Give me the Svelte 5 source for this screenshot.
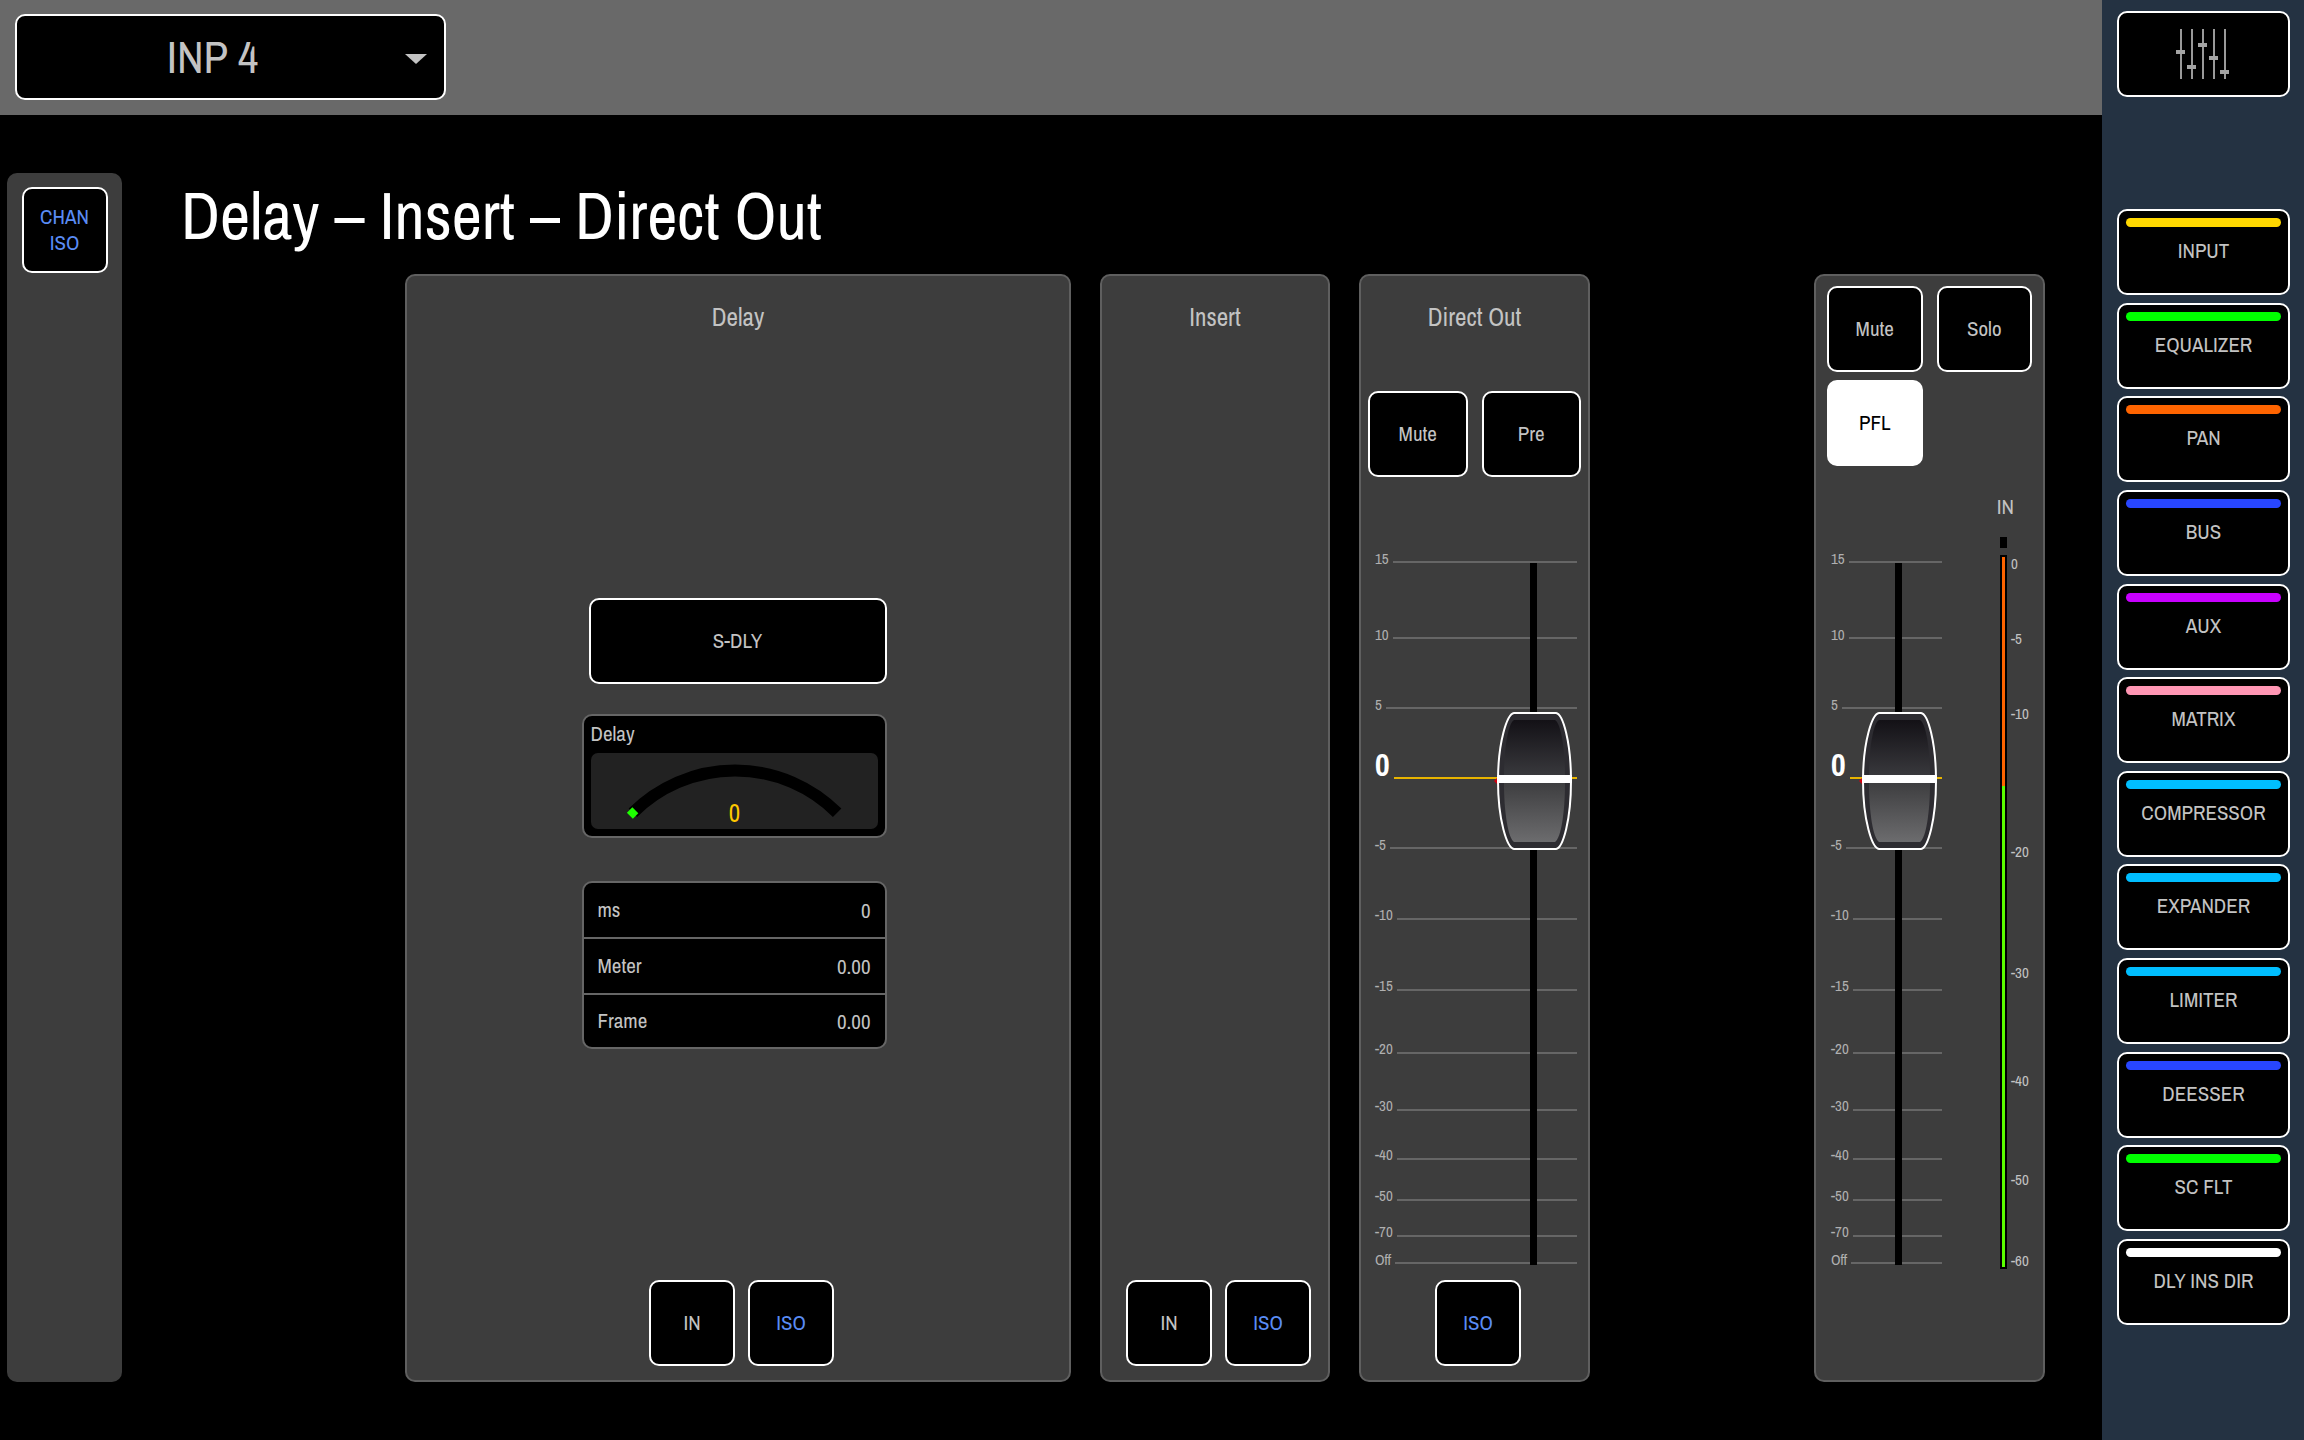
<script>
  const channels = ['INP 1', 'INP 2', 'INP 3', 'INP 4', 'INP 5', 'INP 6'];
  let channel = 'INP 4';

  const pages = [
    { name: 'INPUT', color: '#ffd800' },
    { name: 'EQUALIZER', color: '#00ff00' },
    { name: 'PAN', color: '#ff6400' },
    { name: 'BUS', color: '#2846ff' },
    { name: 'AUX', color: '#c800ff' },
    { name: 'MATRIX', color: '#ff96b4' },
    { name: 'COMPRESSOR', color: '#00beff' },
    { name: 'EXPANDER', color: '#00beff' },
    { name: 'LIMITER', color: '#00beff' },
    { name: 'DEESSER', color: '#2846ff' },
    { name: 'SC FLT', color: '#00ff00' },
    { name: 'DLY INS DIR', color: '#ffffff' },
  ];

  const delayValues = [
    ['ms', '0'],
    ['Meter', '0.00'],
    ['Frame', '0.00'],
  ];

  // distance of each mark from the top of the fader scale
  const faderMarks = [
    ['15', 0], ['10', 76], ['5', 146], ['0', 216], ['-5', 286], ['-10', 356], ['-15', 427],
    ['-20', 490], ['-30', 547], ['-40', 596], ['-50', 637], ['-70', 673], ['Off', 700],
  ];
  const meterMarks = [
    ['0', 0], ['-5', 75], ['-10', 150], ['-20', 288], ['-30', 408], ['-40', 516], ['-50', 615], ['-60', 696],
  ];

  const rows = (marks) =>
    marks
      .slice(1)
      .map((mark, i) => `minmax(0, ${mark[1] - marks[i][1]}fr)`)
      .join(' ') + ' 0px';

  let directLevel = 0;
  let channelLevel = 0;

  // cap position at 0 dB and level of the input meter, in percent
  const zeroPos = (219 / 700) * 100;
  const hotPart = 32.2;

  const strips = [52, 67, 45, 58, 72];
</script>

{#snippet fader(label, level, onlevel)}
  <div class="fader">
    <div class="scale" style="grid-template-rows: {rows(faderMarks)}">
      {#each faderMarks as [text]}
        <div class="mark" class:zero={text === '0'}>
          <span>{text}</span>
          <i></i>
        </div>
      {/each}
    </div>
    <div class="track"></div>
    <svg class="cap" style="top: {zeroPos}%" width="80" height="138" viewBox="0 0 80 138" aria-hidden="true">
      <defs>
        <linearGradient id="capTop" x1="0" y1="0" x2="0" y2="1">
          <stop offset="0" stop-color="#131116" />
          <stop offset="1" stop-color="#38383c" />
        </linearGradient>
        <linearGradient id="capBottom" x1="0" y1="0" x2="0" y2="1">
          <stop offset="0" stop-color="#3e3e40" />
          <stop offset="1" stop-color="#6c6c6e" />
        </linearGradient>
      </defs>
      <path d="M1 69l4-4v8z" fill="#d00010" />
      <path
        d="M21 1H63C70 2 78 30 78 69C78 108 70 136 63 137H21C14 136 5 108 5 69C5 30 14 2 21 1Z"
        fill="#2d2c31"
        stroke="#fff"
        stroke-width="2"
      />
      <path d="M21 8H62C68 11 72 38 72 63H11C11 38 15 11 21 8Z" fill="url(#capTop)" />
      <path d="M11 71H72C72 100 68 126 62 130H21C15 126 11 100 11 71Z" fill="url(#capBottom)" />
      <path d="M4 63H79V71H4Z" fill="#fff" />
    </svg>
    <input type="range" min="-100" max="15" value={level} aria-label={label} on:input={onlevel} />
  </div>
{/snippet}

<div class="app">
  <div class="main">
    <header>
      <div class="picker">
        <select bind:value={channel} aria-label="Channel">
          {#each channels as name}
            <option>{name}</option>
          {/each}
        </select>
      </div>
    </header>

    <div class="work">
      <aside>
        <button type="button" class="square iso">CHAN<br />ISO</button>
      </aside>

      <main>
        <h1>Delay – Insert – Direct Out</h1>

        <div class="panels">
          <section class="panel delay">
            <h2>Delay</h2>
            <div class="delay-body">
              <button type="button" class="sdly">S-DLY</button>
              <div class="knob">
                <h3>Delay</h3>
                <svg viewBox="0 0 288 76" role="img" aria-label="Delay amount">
                  <path d="M42 60A145 145 0 0 1 247 60" fill="none" stroke="#000" stroke-width="12" />
                  <path d="M36 60L41.500 54.500L47.500 60.500L42 66Z" fill="#1eff00" />
                  <text x="144" y="69" text-anchor="middle">0</text>
                </svg>
              </div>
              <table>
                <tbody>
                  {#each delayValues as [unit, value]}
                    <tr>
                      <th scope="row">{unit}</th>
                      <td>{value}</td>
                    </tr>
                  {/each}
                </tbody>
              </table>
            </div>
            <div class="switches">
              <button type="button" class="square">IN</button>
              <button type="button" class="square iso">ISO</button>
            </div>
          </section>

          <section class="panel insert">
            <h2>Insert</h2>
            <div class="switches">
              <button type="button" class="square">IN</button>
              <button type="button" class="square iso">ISO</button>
            </div>
          </section>

          <section class="panel direct">
            <h2>Direct Out</h2>
            <div class="pair">
              <button type="button">Mute</button>
              <button type="button">Pre</button>
            </div>
            {@render fader('Direct out level', directLevel, (e) => (directLevel = +e.target.value))}
            <div class="switches">
              <button type="button" class="square iso">ISO</button>
            </div>
          </section>

          <section class="panel channel">
            <div class="pair">
              <button type="button">Mute</button>
              <button type="button">Solo</button>
              <button type="button" class="active" aria-pressed="true">PFL</button>
            </div>
            <h4>IN</h4>
            <div class="levels">
              {@render fader('Channel level', channelLevel, (e) => (channelLevel = +e.target.value))}
              <div class="meter">
                <div class="bars">
                  <div class="clip"></div>
                  <div class="bar">
                    <div class="hot" style="height: {hotPart}%"></div>
                    <div class="ok"></div>
                  </div>
                </div>
                <div class="meter-scale" style="grid-template-rows: {rows(meterMarks)}">
                  {#each meterMarks as [text]}
                    <span>{text}</span>
                  {/each}
                </div>
              </div>
            </div>
          </section>
        </div>
      </main>
    </div>
  </div>

  <nav>
    <button type="button" aria-label="Mixer">
      <svg width="56" height="50" viewBox="0 0 56 50" aria-hidden="true">
        {#each strips as y, i}
          <rect x={4 + i * 11} y="0" width="2" height="50" fill="#999" />
          <rect x={i * 11} y={y - 31} width="9" height="4" fill="#a4a4a4" />
        {/each}
      </svg>
    </button>
    <div class="pages">
      {#each pages as page}
        <button type="button">
          <i style="background: {page.color}"></i>
          <span>{page.name}</span>
        </button>
      {/each}
    </div>
  </nav>
</div>

<style>
  :global(body) {
    margin: 0;
    background: #000;
  }
  .app {
    display: flex;
    min-height: 100vh;
    background: #000;
    color: #c3c3c3;
    font: 21px/24px 'Archivo Narrow', 'Liberation Sans Narrow', 'Liberation Sans', sans-serif;
  }
  .app *,
  .app {
    box-sizing: border-box;
  }
  h1,
  h2,
  h3,
  h4 {
    margin: 0;
    font-weight: 400;
  }
  button {
    height: 86px;
    padding: 0;
    border: 2px solid #fff;
    border-radius: 10px;
    background: #000;
    color: inherit;
    font: inherit;
    cursor: pointer;
  }
  .square {
    width: 86px;
  }
  .iso {
    color: #5a8cf5;
  }
  .active {
    background: #fff;
    color: #000;
  }

  .main {
    flex: 1;
    display: flex;
    flex-direction: column;
    min-width: 0;
  }
  header {
    height: 115px;
    padding: 14px 15px;
    background: #696969;
  }
  .picker {
    position: relative;
    width: 431px;
  }
  .picker::after {
    content: '';
    position: absolute;
    right: 19px;
    top: 40px;
    border: 11px solid transparent;
    border-top: 10px solid #c3c3c3;
    border-bottom: 0;
    pointer-events: none;
  }
  select {
    display: block;
    width: 100%;
    height: 86px;
    padding: 0 36px 0 0;
    border: 2px solid #fff;
    border-radius: 10px;
    appearance: none;
    background: #000;
    color: #c3c3c3;
    font: inherit;
    font-size: 45px;
    line-height: 56px;
    text-align-last: center;
  }
  .work {
    flex: 1;
    display: flex;
    gap: 59px;
    padding: 58px 57px 58px 7px;
  }
  aside {
    width: 115px;
    padding-top: 14px;
    border-radius: 10px;
    background: #3d3d3d;
    text-align: center;
  }
  aside .square {
    line-height: 26px;
  }
  main {
    flex: 1;
    display: flex;
    flex-direction: column;
  }
  h1 {
    height: 101px;
    color: #fff;
    font-size: 66px;
    line-height: 86px;
  }

  .panels {
    flex: 1;
    display: flex;
    gap: 29px;
    padding-left: 224px;
  }
  .panel {
    display: flex;
    flex-direction: column;
    border: 2px solid #5f5f5f;
    border-radius: 10px;
    background: #3d3d3d;
  }
  h2 {
    height: 115px;
    padding-top: 25px;
    font-size: 25px;
    line-height: 32px;
    text-align: center;
  }
  .switches {
    display: flex;
    justify-content: center;
    gap: 13px;
    margin-top: auto;
    padding: 0 0 14px 7px;
  }

  .delay {
    flex: 1;
  }
  .delay-body {
    display: flex;
    flex-direction: column;
    align-items: flex-end;
    width: 313px;
    margin: 207px auto 0;
    padding-right: 8px;
  }
  .sdly {
    width: 298px;
  }
  .knob {
    width: 305px;
    height: 124px;
    margin: 30px 0 43px;
    padding: 7px;
    border: 2px solid #666;
    border-radius: 10px;
    background: #000;
  }
  h3 {
    height: 30px;
    font-size: 21px;
    line-height: 22px;
  }
  .knob svg {
    display: block;
    width: 100%;
    border-radius: 7px;
    background: #222;
  }
  .knob text {
    fill: #ffc800;
    font-size: 25px;
  }
  table {
    width: 305px;
    height: 168px;
    border: 2px solid #666;
    border-radius: 10px;
    border-spacing: 0;
    background: #000;
  }
  th,
  td {
    padding: 0 14px;
    font-weight: 400;
    text-align: left;
  }
  td {
    padding-top: 3px;
    text-align: right;
  }
  tr:not(:last-child) > * {
    border-bottom: 2px solid #666;
  }

  .insert {
    width: 230px;
  }
  .direct,
  .channel {
    width: 231px;
  }
  .channel {
    margin-left: 195px;
  }
  .pair {
    display: grid;
    grid-template-columns: 1fr 1fr;
    gap: 8px 14px;
    padding: 0 7px;
  }
  .channel .pair {
    padding: 10px 11px 0;
  }

  .fader {
    position: relative;
    flex: 1;
    display: flex;
    flex-direction: column;
    color: #b0b0b0;
    font-size: 15px;
    line-height: 16px;
  }
  .direct .fader {
    margin: 85px 11px 17px 14px;
  }
  .scale {
    flex: 1;
    display: grid;
  }
  .mark {
    display: flex;
    align-items: center;
    gap: 4px;
    height: 0;
  }
  .mark span {
    padding-bottom: 7px;
  }
  .mark i {
    flex: 1;
    height: 2px;
    background: #666;
  }
  .zero span {
    padding-bottom: 26px;
    color: #fff;
    font-size: 32px;
    font-weight: 700;
  }
  .zero i {
    background: #e8b400;
  }
  .track {
    position: absolute;
    top: 1px;
    right: 40px;
    bottom: -2px;
    width: 7px;
    background: #000;
  }
  .cap {
    position: absolute;
    right: 4px;
    transform: translateY(-50%);
  }
  .fader input {
    position: absolute;
    top: 0;
    right: 4px;
    width: 76px;
    height: 100%;
    margin: 0;
    opacity: 0;
    writing-mode: vertical-lr;
    direction: rtl;
  }

  h4 {
    margin: 29px 29px 0 0;
    line-height: 24px;
    text-align: right;
  }
  .levels {
    flex: 1;
    display: flex;
    justify-content: space-between;
    padding: 18px 12px 111px 15px;
  }
  .levels .fader {
    flex: 0 0 111px;
    margin: 25px 0 6px;
  }
  .meter {
    display: flex;
    gap: 4px;
    width: 34px;
    margin-right: -3px;
  }
  .bars {
    display: flex;
    flex-direction: column;
    gap: 7px;
  }
  .clip {
    width: 7px;
    height: 11px;
    background: #000;
  }
  .bar {
    flex: 1;
    display: flex;
    flex-direction: column;
    padding: 2px;
    width: 7px;
    background: #000;
  }
  .hot {
    background: #ff6400;
  }
  .ok {
    flex: 1;
    background: #5aff00;
  }
  .meter-scale {
    flex: 1;
    display: grid;
    margin: 27px 0 8px;
    color: #c3c3c3;
    font-size: 15px;
    line-height: 16px;
  }
  .meter-scale span {
    display: flex;
    align-items: center;
    height: 0;
  }

  nav {
    display: flex;
    flex-direction: column;
    width: 202px;
    padding: 11px 14px 115px 15px;
    background: #243242;
  }
  nav button {
    flex: none;
  }
  nav svg {
    display: block;
    margin: 0 auto;
  }
  .pages {
    flex: 1;
    display: flex;
    flex-direction: column;
    justify-content: space-between;
    margin-top: 112px;
  }
  .pages button {
    display: flex;
    flex-direction: column;
    gap: 12px;
    padding: 7px;
    text-align: center;
  }
  .pages i {
    width: 100%;
    height: 9px;
    border-radius: 5px;
  }
  .pages span {
    width: 100%;
  }
</style>
